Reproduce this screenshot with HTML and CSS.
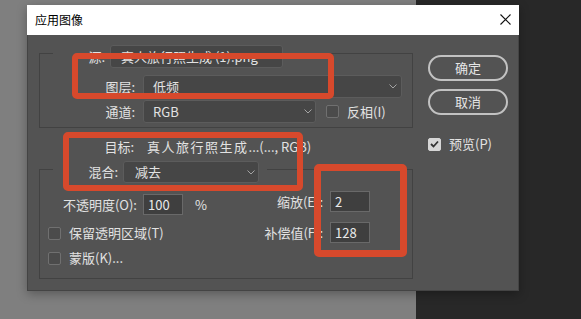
FILE: index.html
```html
<!DOCTYPE html>
<html lang="zh-CN">
<head>
    <meta charset="UTF-8">
    <meta name="viewport" content="width=device-width, initial-scale=1.0">
    <title>应用图像</title>
    <link rel="stylesheet" href="styles.css">
</head>
<body>
    <div class="dialog">
        <div class="titlebar">
            <span class="title">应用图像</span>
            <svg class="close" width="11" height="11" viewBox="0 0 11 11">
                <path d="M0.5 0.5 L10.5 10.5 M10.5 0.5 L0.5 10.5" stroke="#111" stroke-width="1.1" fill="none"/>
            </svg>
        </div>

        <div class="content">
            <div class="main">
                <div class="group">
                    <div class="group-head head-source">
                        <span class="lbl lbl-source">源:</span>
                        <div class="select select-source">
                            <span>真人旅行照生成 (1).png</span>
                            <svg class="chev" width="8" height="5" viewBox="0 0 8 5"><path d="M0.5 0.5 L4 4 L7.5 0.5" stroke="#a4a4a4" fill="none"/></svg>
                        </div>
                    </div>
                    <div class="row">
                        <span class="lbl">图层:</span>
                        <div class="select select-layer">
                            <span>低频</span>
                            <svg class="chev" width="8" height="5" viewBox="0 0 8 5"><path d="M0.5 0.5 L4 4 L7.5 0.5" stroke="#a4a4a4" fill="none"/></svg>
                        </div>
                    </div>
                    <div class="row row-channel">
                        <span class="lbl">通道:</span>
                        <div class="select select-channel">
                            <span>RGB</span>
                            <svg class="chev" width="8" height="5" viewBox="0 0 8 5"><path d="M0.5 0.5 L4 4 L7.5 0.5" stroke="#a4a4a4" fill="none"/></svg>
                        </div>
                        <span class="check check-invert"></span>
                        <span class="check-text">反相(I)</span>
                    </div>
                </div>

                <div class="row row-target">
                    <span class="lbl">目标:</span>
                    <span class="target"><span class="target-name">真人旅行照生成</span>...(..., RGB)</span>
                </div>

                <div class="group group-blend">
                    <div class="group-head head-blend">
                        <span class="lbl lbl-blend">混合:</span>
                        <div class="select select-blend">
                            <span>减去</span>
                            <svg class="chev" width="8" height="5" viewBox="0 0 8 5"><path d="M0.5 0.5 L4 4 L7.5 0.5" stroke="#a4a4a4" fill="none"/></svg>
                        </div>
                    </div>
                    <div class="blend-body">
                        <div class="blend-left">
                            <div class="row row-opacity">
                                <span class="lbl lbl-opacity">不透明度(O):</span>
                                <div class="field">100</div>
                                <span class="unit">%</span>
                            </div>
                            <div class="check-row">
                                <span class="check"></span>
                                <span class="check-text">保留透明区域(T)</span>
                            </div>
                            <div class="check-row">
                                <span class="check"></span>
                                <span class="check-text">蒙版(K)...</span>
                            </div>
                        </div>
                        <div class="blend-right">
                            <div class="row row-num">
                                <span class="lbl lbl-num">缩放(E):</span>
                                <div class="field">2</div>
                            </div>
                            <div class="row row-num">
                                <span class="lbl lbl-num">补偿值(F):</span>
                                <div class="field">128</div>
                            </div>
                        </div>
                    </div>
                </div>
            </div>

            <div class="side">
                <button class="btn">确定</button>
                <button class="btn">取消</button>
                <div class="check-row preview">
                    <span class="check checked">
                        <svg width="9" height="8" viewBox="0 0 9 8"><path d="M1 4 L3.5 6.5 L8 1.5" stroke="#333" stroke-width="1.8" fill="none"/></svg>
                    </span>
                    <span class="check-text">预览(P)</span>
                </div>
            </div>
        </div>
    </div>

    <div class="mark mark-layer"></div>
    <div class="mark mark-blend"></div>
    <div class="mark mark-values"></div>
</body>
</html>
```

FILE: styles.css
```css
body {
    margin: 0;
    padding: 5px 0 0 27px;
    width: 581px;
    height: 319px;
    box-sizing: border-box;
    overflow: hidden;
    position: relative;
    font-family: "Noto Sans CJK SC", "Noto Sans", sans-serif;
    font-size: 13px;
    color: #e2e2e2;
    background: linear-gradient(90deg, #7f7f7f 0, #7f7f7f 416px, #282828 416px);
}

.dialog {
    width: 492px;
    height: 286px;
    box-sizing: border-box;
    background: #535353;
    border: 1px solid #444444;
    border-top: none;
    box-shadow: 0 3px 10px rgba(0, 0, 0, 0.3);
    display: flex;
    flex-direction: column;
}

.titlebar {
    height: 30px;
    background: #ffffff;
    display: flex;
    align-items: center;
    justify-content: space-between;
    padding: 0 8px 0 8px;
    margin: 0 -1px;
}

.title {
    color: #000000;
    font-size: 12px;
    line-height: 30px;
}

.close {
    display: block;
    margin-top: -1px;
}

.content {
    flex: 1;
    display: flex;
    padding: 18px 10px 10px 11px;
}

.main {
    width: 374px;
}

.side {
    width: 80px;
    margin-left: 15px;
    padding-top: 2px;
    display: flex;
    flex-direction: column;
}

/* group boxes */
.group {
    border: 1px solid #424242;
    padding-bottom: 4px;
}

.group-head {
    display: flex;
    align-items: center;
    background: #535353;
    margin: -9px 0 0 13px;
    width: max-content;
}

.head-source {
    padding-right: 3px;
}

.head-blend {
    padding-right: 8px;
}

.row {
    display: flex;
    align-items: center;
    height: 23px;
    margin-top: 2px;
}

.group > .row:nth-child(2) {
    margin-top: 7px;
}

.lbl {
    width: 95px;
    text-align: right;
    line-height: 20px;
    white-space: nowrap;
    margin-right: 8px;
    flex-shrink: 0;
}

.lbl-source {
    width: 52px;
    margin-right: 5px;
}

.lbl-blend {
    width: 65px;
    margin-right: 5px;
}

/* dropdowns */
.select {
    box-sizing: border-box;
    height: 23px;
    background: #464646;
    border: 1px solid #5c5c5c;
    border-radius: 3px;
    display: flex;
    align-items: center;
    justify-content: space-between;
    padding: 0 3px 0 9px;
    line-height: 20px;
    white-space: nowrap;
}

.chev {
    display: block;
    flex-shrink: 0;
}

.select-source {
    width: 173px;
    padding-left: 10px;
}

.select-layer {
    width: 259px;
    padding-right: 4px;
}

.select-channel {
    width: 173px;
}

.select-blend {
    width: 136px;
    height: 22px;
    padding-left: 11px;
}

/* checkboxes */
.check {
    box-sizing: border-box;
    width: 13px;
    height: 13px;
    border: 1px solid #707070;
    background: #4b4b4b;
    border-radius: 2px;
    flex-shrink: 0;
    display: flex;
    align-items: center;
    justify-content: center;
}

.check.checked {
    background: #d6d6d6;
    border-color: #d6d6d6;
}

.check.checked svg {
    display: block;
}

.check-invert {
    margin-left: 10px;
}

.check-text {
    margin-left: 8px;
    line-height: 20px;
    white-space: nowrap;
}

.check-row {
    display: flex;
    align-items: center;
    height: 20px;
}

/* target line */
.row-target {
    margin-top: 7px;
    margin-bottom: 11px;
}

.row-target .lbl {
    margin-right: 13px;
}

.target {
    white-space: nowrap;
    line-height: 20px;
}

.target-name {
    letter-spacing: 1.5px;
}

/* blend group */
.group-blend {
    padding-bottom: 10px;
}

.blend-body {
    display: flex;
    justify-content: space-between;
}

.blend-left {
    padding-top: 11px;
}

.blend-left .check-row {
    padding-left: 8px;
    margin-top: 5px;
}

.blend-left .row-opacity + .check-row {
    margin-top: 8px;
}

.row-opacity {
    height: 21px;
    margin-top: 0;
}

.lbl-opacity {
    width: 97px;
    margin-right: 6px;
}

.field {
    box-sizing: border-box;
    width: 40px;
    height: 21px;
    background: #3f3f3f;
    border: 1px solid #696969;
    padding-left: 4px;
    line-height: 19px;
    color: #eaeaea;
}

.unit {
    margin-left: 12px;
    line-height: 20px;
}

.blend-right {
    padding-top: 8px;
    padding-right: 42px;
}

.row-num {
    height: 21px;
    margin-top: 10px;
}

.row-num:first-child {
    margin-top: 0;
}

.lbl-num {
    width: 80px;
    margin-right: 7px;
}

/* buttons */
.btn {
    box-sizing: border-box;
    width: 80px;
    height: 26px;
    margin: 0 0 8px 0;
    padding: 0;
    background: #535353;
    border: 2px solid #c2c2c2;
    border-radius: 13px;
    color: #e6e6e6;
    font-family: inherit;
    font-size: 13px;
    line-height: 20px;
}

.preview {
    margin-top: 11px;
    height: 20px;
}

/* red annotation frames */
.mark {
    position: absolute;
    box-sizing: border-box;
    border: 6px solid #d7492c;
    border-radius: 5px;
}

.mark-layer {
    left: 72px;
    top: 53px;
    width: 262px;
    height: 46px;
}

.mark-blend {
    left: 63px;
    top: 132px;
    width: 240px;
    height: 59px;
}

.mark-values {
    left: 314px;
    top: 164px;
    width: 93px;
    height: 93px;
    border-width: 7px;
}
```
